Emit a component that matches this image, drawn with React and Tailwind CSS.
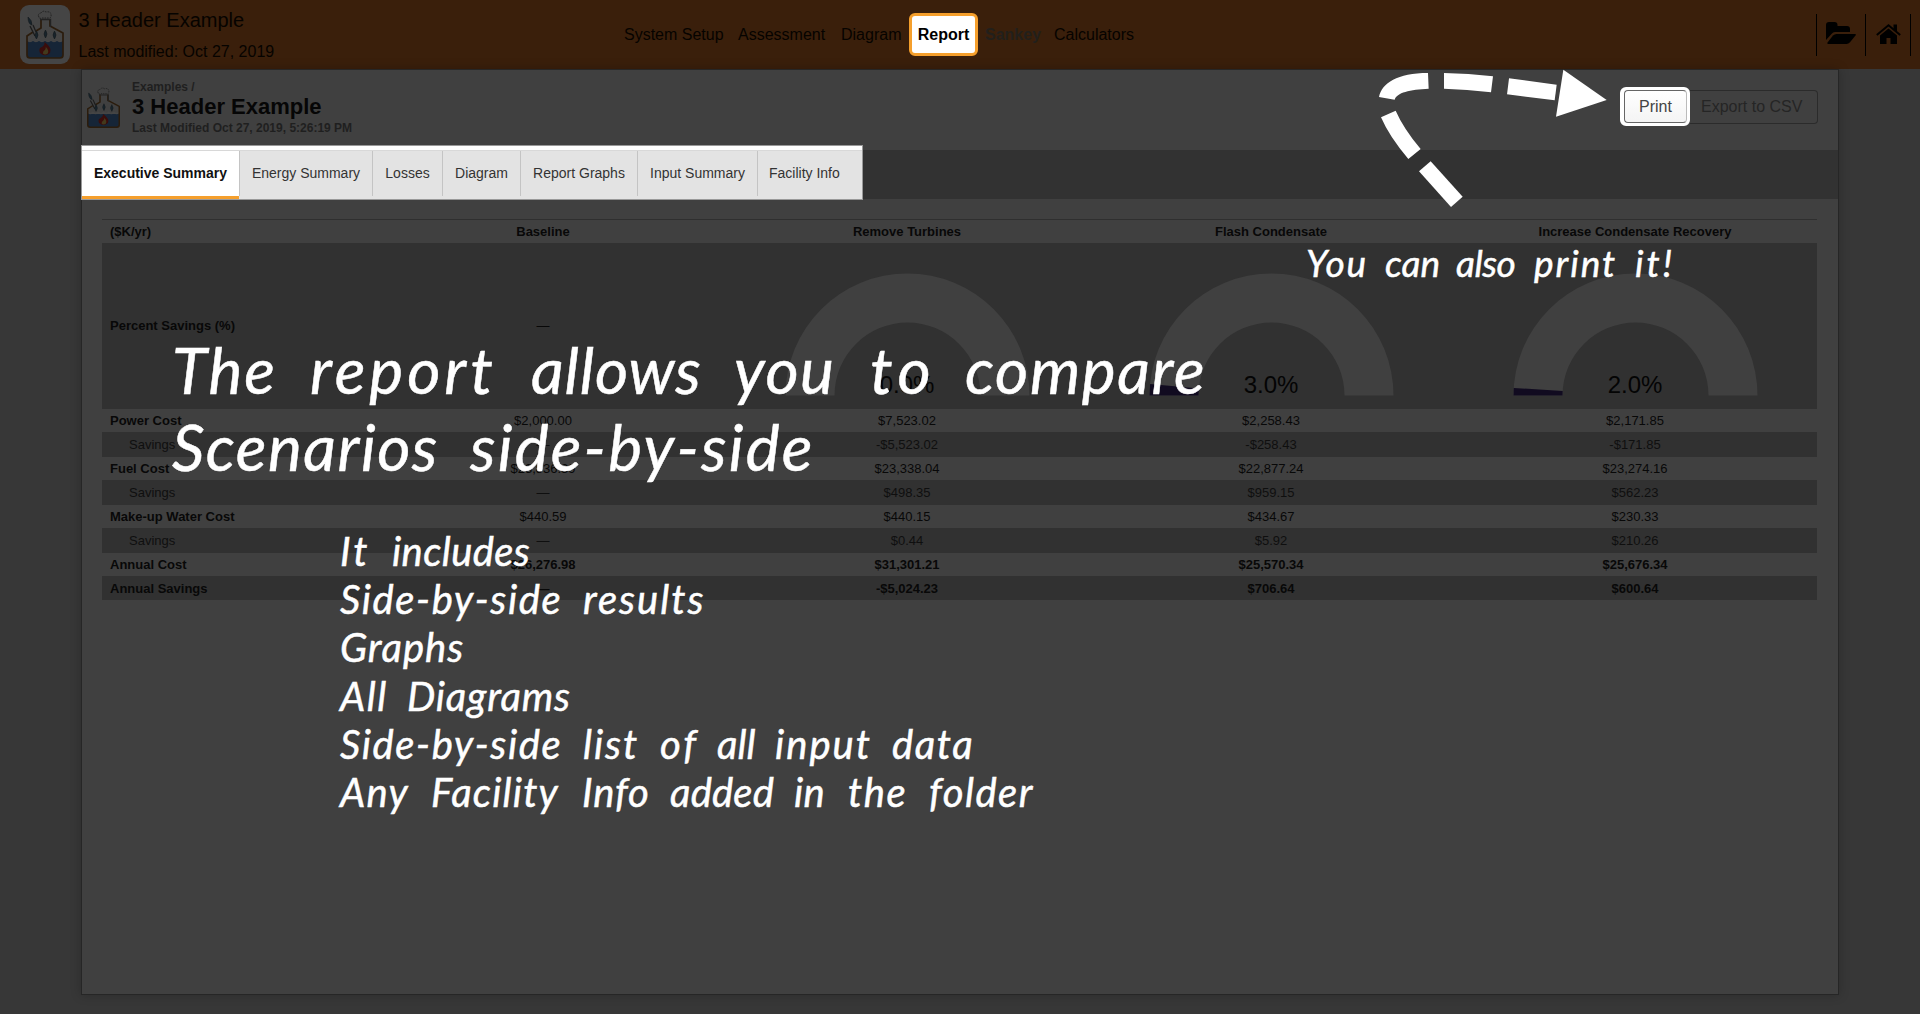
import React from "react";

const tabs = [
  ["Energy Summary", "w-[133px]"],
  ["Losses", "w-[70px]"],
  ["Diagram", "w-[78px]"],
  ["Report Graphs", "w-[117px]"],
  ["Input Summary", "w-[120px]"],
];

const columns = ["Baseline", "Remove Turbines", "Flash Condensate", "Increase Condensate Recovery"];

const rows = [
  { label: "Power Cost", values: ["$2,000.00", "$7,523.02", "$2,258.43", "$2,171.85"], kind: "cost" },
  { label: "Savings", values: ["—", "-$5,523.02", "-$258.43", "-$171.85"], kind: "savings" },
  { label: "Fuel Cost", values: ["$23,836.39", "$23,338.04", "$22,877.24", "$23,274.16"], kind: "cost" },
  { label: "Savings", values: ["—", "$498.35", "$959.15", "$562.23"], kind: "savings" },
  { label: "Make-up Water Cost", values: ["$440.59", "$440.15", "$434.67", "$230.33"], kind: "cost" },
  { label: "Savings", values: ["—", "$0.44", "$5.92", "$210.26"], kind: "savings" },
  { label: "Annual Cost", values: ["$26,276.98", "$31,301.21", "$25,570.34", "$25,676.34"], kind: "total" },
  { label: "Annual Savings", values: ["—", "-$5,024.23", "$706.64", "$600.64"], kind: "totalSavings" },
];

const rowStyle = {
  cost: { row: "h-[23px] text-[#080808]", label: "pl-2 font-bold", value: "" },
  savings: { row: "h-[25px] bg-[#313131] text-[#0f0f0f]", label: "pl-[27px]", value: "" },
  total: { row: "h-[23px] text-[#080808]", label: "pl-2 font-bold", value: "font-bold" },
  totalSavings: { row: "h-6 bg-[#313131] pt-px text-[#080808]", label: "pl-2 font-bold", value: "font-bold" },
};

const gridCols = "grid grid-cols-[259px_364px_364px_364px_364px] items-center";

function Flask({ className }) {
  return (
    <svg viewBox="0 0 40 50" className={className} preserveAspectRatio="none">
      <path d="M2 31 H38 V46 Q38 48 36 48 H4 Q2 48 2 46Z" fill="#162537" />
      <path d="M2 30 q3 3 6 0 q3 3 6 0 q3 3 6 0 q3 3 6 0 q3 3 6 0 q3 3 6 0" fill="none" stroke="#454545" strokeWidth="1.6" />
      <path d="M16 9 V18 L11 21 M8 22 L2 26 V45 Q2 48 5 48 H35 Q38 48 38 45 V23 L25 16 V9" fill="none" stroke="#2b1c0c" strokeWidth="1.7" />
      <path d="M15 9.500 H25.500 V17" fill="none" stroke="#222" strokeWidth="1.4" />
      <path d="M14 7 q-2 -3 2 -4 q2 -3 5 -1 q5 -1 5 3 q1 3 -3 3 h-6 q-3 1 -3 -1z" fill="none" stroke="#202020" strokeWidth="1" strokeDasharray="1.500 1" />
      <path d="M5 16 L10 26 M8 15 L11 22" stroke="#1c1c1c" strokeWidth="1.3" />
      <path d="M3 7 q4 3 4 8 q-4 -1 -4 -8z M11.500 21 q-3 5 0 8 q3 -4 0 -8z M20.500 20 q-3 4 0 8 q3 -4 0 -8z M29.500 21 q-3 4 0 8 q3 -4 0 -8z" fill="#18242b" stroke="#14191d" strokeWidth="0.6" />
      <path d="M19.500 32 q8 6 5.500 11 q-5 4.500 -10 0 q-2 -5 2 -6 q3 -2 2.500 -5z" fill="#3a0d0b" />
      <path d="M20.800 37 q3.500 3 2 6.500 q-3 2 -5 0 q0 -2.500 2 -3.500 q1 -1 1 -3z" fill="#43391c" />
    </svg>
  );
}

function FolderIcon() {
  return (
    <svg viewBox="0 0 30 22" className="h-[22px] w-[30px]" fill="black">
      <path d="M0 18 V3 Q0 0 3 0 H8.500 Q11.500 0 11.500 3 V4 H21 Q24 4 24 7 V10 H9 Q7 10 5.500 12Z" />
      <path d="M1.500 20.500 L7 13.500 Q8.500 12 10.500 12 H29 Q30.500 12 29.500 13.500 L24 20.300 Q22.500 22 20.500 22 H2 Q1 22 1.500 20.500Z" />
    </svg>
  );
}

function HomeIcon() {
  return (
    <svg viewBox="0 0 25 20" className="h-5 w-[25px]" fill="black">
      <path d="M0.800 11 L12.500 1.300 L24.200 11" fill="none" stroke="black" strokeWidth="2" />
      <path d="M17.500 0.500 H21 V8.500 L17.500 5.500Z" />
      <path d="M4 11.500 L12.500 4.500 L21 11.500 V20 H14.500 V14 H10.500 V20 H4Z" />
    </svg>
  );
}

function Gauge({ value, slice }) {
  return (
    <div className="relative h-full w-full">
      <svg viewBox="0 0 364 166" className="h-full w-full">
        <path d="M60.500 152.500 A122 122 0 0 1 304.500 152.500 H255.500 A73 73 0 0 0 109.500 152.500Z" fill="#404040" />
        {slice && <path d={slice} fill="#110b20" />}
      </svg>
      <div className="absolute inset-x-0 top-[128px] text-center text-2xl leading-7 text-[#040404]">{value}</div>
    </div>
  );
}

function Words({ list }) {
  return (
    <div className="flex whitespace-nowrap [-webkit-text-stroke:0.5px_white]">
      {list.map(([word, style], i) => (
        <span key={i} className={"inline-block shrink-0 " + style}>{word}</span>
      ))}
    </div>
  );
}

function Header() {
  return (
    <header className="grid h-[69px] grid-cols-[624px_1fr_104px] items-center bg-[#3a1f0b] text-base text-[#060300]">
      <div className="flex h-full items-start">
        <div className="mt-[5px] ml-5 flex h-[59px] w-[50px] items-center justify-center rounded-[9px] bg-[#454545]">
          <Flask className="h-[50px] w-10" />
        </div>
        <div className="ml-[8.5px] whitespace-nowrap">
          <div className="mt-2 text-xl leading-6">3 Header Example</div>
          <div className="mt-[10px] text-base leading-5">Last modified: Oct 27, 2019</div>
        </div>
      </div>
      <nav className="flex items-center whitespace-nowrap">
        <span className="w-[114px]">System Setup</span>
        <span className="w-[103px]">Assessment</span>
        <span className="w-[68px]">Diagram</span>
        <span className="flex h-[43px] w-[69px] items-center justify-center rounded-md border-[3px] border-[#f59f2c] bg-white font-bold text-black">Report</span>
        <span className="ml-[7px] w-[69px] font-bold text-[#221f1b]">Sankey</span>
        <span>Calculators</span>
      </nav>
      <div className="flex h-[42px] items-center text-black">
        <div className="flex h-full w-[49px] items-center justify-center border-l border-black pb-1"><FolderIcon /></div>
        <div className="flex h-full w-[46px] items-center justify-center border-x border-black pb-[2px]"><HomeIcon /></div>
      </div>
    </header>
  );
}

export default function App() {
  return (
    <div className="relative h-[1014px] w-[1920px] overflow-hidden bg-[#373737] font-['Liberation_Sans',Arial,sans-serif]">
      <Header />
      <main className="ml-[81px] h-[926px] w-[1758px] border border-[#262626] bg-[#404040] shadow-[0_0_10px_rgba(0,0,0,0.22)]">
        <div className="flex h-[80px] items-start justify-between">
          <div className="flex">
            <Flask className="mt-[17px] ml-1 h-[42px] w-[35px]" />
            <div className="ml-[11px] pt-[9px] font-bold text-[#1f1f1f]">
              <div className="text-xs leading-4">Examples /</div>
              <div className="text-[22px] leading-6 text-[#060606]">3 Header Example</div>
              <div className="pt-px text-xs leading-4">Last Modified Oct 27, 2019, 5:26:19 PM</div>
            </div>
          </div>
          <div className="mt-[17px] mr-5 flex items-center text-base">
            <div className="z-10 flex h-[39px] w-[70px] items-center justify-center rounded-md border-[3px] border-l-4 border-white bg-white">
              <div className="flex h-[33px] w-full items-center justify-center rounded-sm border border-r-[#bbb] border-[#666] bg-gradient-to-b from-white to-[#f4f4f4] text-[#444]">Print</div>
            </div>
            <div className="flex h-[34px] w-[128px] items-center rounded-r-sm border border-l-0 border-[#2b2b2b] pl-[11px] text-[#252525]">Export to CSV</div>
          </div>
        </div>
        <div className="flex h-[49px] bg-[#323232]">
          <div className="-mt-[5px] -ml-px h-[55px] w-[782px] border border-[#999] bg-white">
            <div className="mt-1 flex h-[49px] border-t border-[#d8d8d8] bg-[#e3e3e3] text-sm text-[#333]">
              <div className="flex w-[157px] items-center justify-center border-b-[3px] border-[#f59f2c] bg-white pb-px font-bold text-[#111]">Executive Summary</div>
              {tabs.map(([name, width]) => (
                <div key={name} className={"flex h-[45px] items-center justify-center border-l border-[#c4c4c4] pb-[2px] " + width}>{name}</div>
              ))}
              <div className="flex h-[45px] items-center border-l border-[#c4c4c4] pb-[2px] pl-[11px]">Facility Info</div>
            </div>
          </div>
        </div>
        <section className="mt-5 ml-5 w-[1715px] border-t border-[#2f2f2f] text-[13px]">
          <div className={gridCols + " h-[23px] font-bold text-[#080808]"}>
            <div className="pl-2">($K/yr)</div>
            {columns.map((name) => <div key={name} className="text-center">{name}</div>)}
          </div>
          <div className={gridCols + " h-[166px] bg-[#313131] text-[#080808]"}>
            <div className="pl-2 font-bold">Percent Savings (%)</div>
            <div className="text-center">—</div>
            <Gauge value="0.0%" />
            <Gauge value="3.0%" slice="M60.500 152.500 L61.100 141 L109.900 145.600 L109.500 152.500Z" />
            <Gauge value="2.0%" slice="M60.500 152.500 L60.800 144.900 L109.700 147.900 L109.500 152.500Z" />
          </div>
          {rows.map((row, i) => (
            <div key={i} className={gridCols + " " + rowStyle[row.kind].row}>
              <div className={rowStyle[row.kind].label}>{row.label}</div>
              {row.values.map((value, j) => (
                <div key={j} className={"text-center " + rowStyle[row.kind].value}>{value}</div>
              ))}
            </div>
          ))}
        </section>
      </main>
      <svg viewBox="0 0 750 480" className="absolute top-[55px] left-[1360px] h-[160px] w-[250px]" fill="white">
        <path d="M57 126 C66 84 112 54 204 54 L206 101 C150 103 110 113 104 134Z" />
        <path d="M252 54 Q325 55 399 64 L393 112 Q320 103 252 101Z" />
        <path d="M447 70 L590 89 L584 136 L441 118Z" />
        <path d="M63 187 L107 167 Q130 220 182 282 L145 312 Q88 245 63 187Z" />
        <path d="M212 319 L308 425 L273 456 L177 349Z" />
        <path d="M610 44 L740 135 L588 185Z" />
      </svg>
      <div className="absolute top-[331px] left-[172px] font-['Lato','Open_Sans',sans-serif] text-[64px] leading-[77px] text-white italic">
        <Words list={[["The", "w-[138px] tracking-[2px]"], ["report", "w-[221px] tracking-[4px]"], ["allows", "w-[203px] tracking-[0.8px]"], ["you", "w-[136px] tracking-[1.5px]"], ["to", "w-[95px] tracking-[5.5px]"], ["compare", "tracking-[1.6px]"]]} />
        <Words list={[["Scenarios", "w-[298px] tracking-[1.5px]"], ["side-by-side", "tracking-[2.2px]"]]} />
      </div>
      <div className="absolute top-[527px] left-[340px] font-['Lato','Open_Sans',sans-serif] text-[40px] leading-[48.2px] text-white italic">
        <Words list={[["It", "w-[52px] tracking-[3px]"], ["includes", "tracking-[0.4px]"]]} />
        <Words list={[["Side-by-side", "w-[243px] tracking-[1.6px]"], ["results", "tracking-[2px]"]]} />
        <Words list={[["Graphs", "tracking-[1px]"]]} />
        <Words list={[["All", "w-[67px] tracking-[1.5px]"], ["Diagrams", "tracking-[0.8px]"]]} />
        <Words list={[["Side-by-side", "w-[243px] tracking-[1.6px]"], ["list", "w-[77px] tracking-[1.9px]"], ["of", "w-[57px] tracking-[3px]"], ["all", "w-[58px]"], ["input", "w-[117px] tracking-[2px]"], ["data", "tracking-[1.6px]"]]} />
        <Words list={[["Any", "w-[91px] tracking-[1.3px]"], ["Facility", "w-[151px] tracking-[1.2px]"], ["Info", "w-[88px] tracking-[0.8px]"], ["added", "w-[124px] tracking-[0.2px]"], ["in", "w-[54px] tracking-[0.3px]"], ["the", "w-[81px] tracking-[1.6px]"], ["folder", "tracking-[1.5px]"]]} />
      </div>
      <div className="absolute top-[239px] left-[1306px] font-['Lato','Open_Sans',sans-serif] text-[37px] leading-[48px] text-white italic">
        <Words list={[["You", "w-[79px] tracking-[1.7px]"], ["can", "w-[71px]"], ["also", "w-[78px] -tracking-[0.5px]"], ["print", "w-[101px] tracking-[2px]"], ["it!", "tracking-[3px]"]]} />
      </div>
    </div>
  );
}
